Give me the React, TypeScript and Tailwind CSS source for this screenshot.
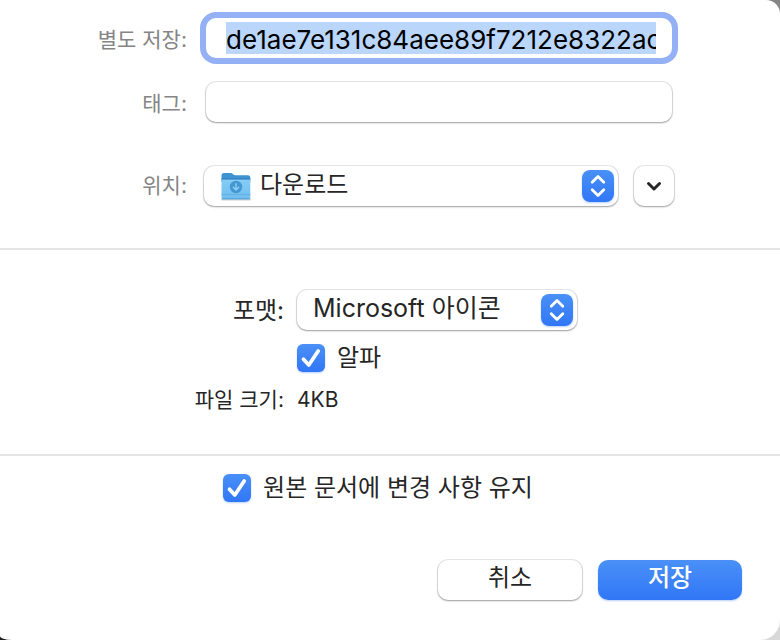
import React, { useState } from 'react';

const StepperBadge = () => (
  <span className="pointer-events-none absolute right-1 top-1/2 flex size-8 -translate-y-1/2 items-center justify-center rounded-lg bg-linear-to-b from-[#4a90f7] to-[#3176f6] shadow-[0_1px_2px_rgba(49,118,246,0.35)]">
    <svg width="32" height="32" viewBox="0 0 32 32" fill="none" stroke="white" strokeWidth="2.8" strokeLinecap="round" strokeLinejoin="round">
      <path d="M10.2 12.300 16 6.500l5.800 5.800M10.2 19.700l5.800 5.800 5.800-5.800" />
    </svg>
  </span>
);

const FolderIcon = () => (
  <svg className="pointer-events-none absolute left-4 top-1/2 -translate-y-1/2" width="32" height="32" viewBox="0 0 32 32">
    <defs>
      <linearGradient id="folder-front" x1="0" y1="0" x2="0" y2="1">
        <stop offset="0" stopColor="#84cdf6" />
        <stop offset="1" stopColor="#6fbdf0" />
      </linearGradient>
    </defs>
    <path d="M2 29.500h28" stroke="#a9aeb2" strokeWidth="2" strokeLinecap="round" opacity="0.6" />
    <path d="M1.500 5.500A2.500 2.500 0 0 1 4 3h6.500c1 0 1.500.3 2.200.9l.8.7c.6.5 1 .6 1.800.6H28A2.300 2.300 0 0 1 30.300 7.500V12H1.500z" fill="#3d94d0" />
    <path d="M1.500 9h28.800v18.500a1.800 1.800 0 0 1-1.800 1.800H3.300a1.800 1.800 0 0 1-1.800-1.800z" fill="url(#folder-front)" />
    <path d="M1.500 9h28.800" stroke="#2f74c0" strokeWidth="1" />
    <path d="M1.500 24.500h28.800" stroke="#5facdf" strokeWidth="0.8" />
    <path d="M2 28.800h27.800" stroke="#4c9bd0" strokeWidth="0.8" />
    <circle cx="16" cy="17" r="6.200" fill="#4597d3" />
    <path d="M16 13.700v6M13.300 17.300l2.700 2.700 2.700-2.700" fill="none" stroke="#8fd0f6" strokeWidth="1.400" strokeLinecap="round" strokeLinejoin="round" />
  </svg>
);

const Checkbox = ({ label }: { label: string }) => {
  const [checked, setChecked] = useState(true);

  return (
    <label className="flex items-center gap-3 text-2xl leading-7">
      <span className="relative size-7">
        <input
          type="checkbox"
          checked={checked}
          onChange={(e) => setChecked(e.target.checked)}
          className="block size-7 appearance-none rounded-md border border-gray-300 bg-white checked:border-0 checked:bg-linear-to-b checked:from-[#4a90f7] checked:to-[#3176f6] checked:shadow-[0_1px_2px_rgba(49,118,246,0.35)]"
        />
        {checked && (
          <svg className="pointer-events-none absolute inset-0" width="28" height="28" viewBox="0 0 28 28" fill="none" stroke="white" strokeWidth="3.7" strokeLinecap="round" strokeLinejoin="round">
            <path d="M6.500 15.200 11.800 21 21.200 7" />
          </svg>
        )}
      </span>
      {label}
    </label>
  );
};

const control = 'rounded-[10px] bg-white shadow-[0_0_0_1px_rgba(0,0,0,0.09),0_1px_2px_rgba(0,0,0,0.32)]';

const App = () => {
  return (
    <div className="min-h-screen bg-[linear-gradient(to_right,#1e1e1e_10%,transparent_50%),linear-gradient(#858585,#d9d9d9)] font-['Inter','Noto_Sans_CJK_KR',sans-serif] text-[#262626]">
      <form className="flex min-h-screen flex-col rounded-tr-[14px] rounded-br-[20px] [border-bottom-left-radius:12px_4px] bg-white" onSubmit={(e) => e.preventDefault()}>
        <section className="grid grid-cols-[187px_1fr] items-center gap-x-[19px] border-b-2 border-[#e5e5e5] pt-[18px] pr-[108px] pb-[42px]">
          <label htmlFor="filename" className="pt-1 text-right text-[21px] text-[#858585]">별도 저장:</label>
          <div className="h-10 rounded-[10px] bg-white py-1 pr-4 pl-5 ring-6 ring-[#95b1f5]">
            <input
              id="filename"
              type="text"
              defaultValue="de1ae7e131c84aee89f7212e8322ac4f"
              className="block h-8 w-full bg-[#bad6fb] pt-0.5 text-[26px] text-black outline-none"
            />
          </div>

          <label htmlFor="tags" className="mt-6 pt-1 text-right text-[21px] text-[#858585]">태그:</label>
          <input id="tags" type="text" className={`${control} mt-6 h-10 w-full px-5 text-2xl outline-none`} />

          <label htmlFor="location" className="mt-11 text-right text-[21px] text-[#858585]">위치:</label>
          <div className="-mx-0.5 mt-11 flex gap-4">
            <div className="relative flex-1">
              <FolderIcon />
              <select id="location" className={`${control} block h-10 w-full appearance-none pr-10 pb-0.5 pl-14 text-2xl outline-none`}>
                <option>다운로드</option>
              </select>
              <StepperBadge />
            </div>
            <button type="button" aria-label="펼치기" className={`${control} flex size-10 items-center justify-center`}>
              <svg width="18" height="18" viewBox="0 0 18 18" fill="none" stroke="#262626" strokeWidth="3" strokeLinecap="round" strokeLinejoin="round">
                <path d="M3.500 6.500 9 12l5.500-5.500" />
              </svg>
            </button>
          </div>
        </section>

        <section className="grid grid-cols-[284px_1fr] items-center gap-x-[13px] border-b-2 border-[#e5e5e5] pt-10 pb-[38px]">
          <label htmlFor="format" className="pt-0.5 text-right text-2xl">포맷:</label>
          <div className="relative w-[280px]">
            <select id="format" className={`${control} block h-10 w-full appearance-none pr-10 pb-0.5 pl-4 text-[25px] outline-none`}>
              <option>Microsoft 아이콘</option>
            </select>
            <StepperBadge />
          </div>

          <div className="col-start-2 mt-[14px]">
            <Checkbox label="알파" />
          </div>

          <span className="mt-3 text-right text-[21px] leading-8">파일 크기:</span>
          <span className="mt-3 text-[21px] leading-8">4KB</span>
        </section>

        <div className="mt-[18px] flex justify-center pr-6">
          <Checkbox label="원본 문서에 변경 사항 유지" />
        </div>

        <div className="mt-[58px] flex justify-end gap-4 pr-[38px] pb-10">
          <button type="button" className={`${control} h-10 w-36 pb-1 text-2xl`}>취소</button>
          <button type="submit" className="h-10 w-36 rounded-[10px] bg-linear-to-b from-[#4a90f7] to-[#3176f6] pb-1 text-2xl font-medium text-white shadow-[0_1px_2px_rgba(49,118,246,0.35)]">저장</button>
        </div>
      </form>
    </div>
  );
};

export default App;
